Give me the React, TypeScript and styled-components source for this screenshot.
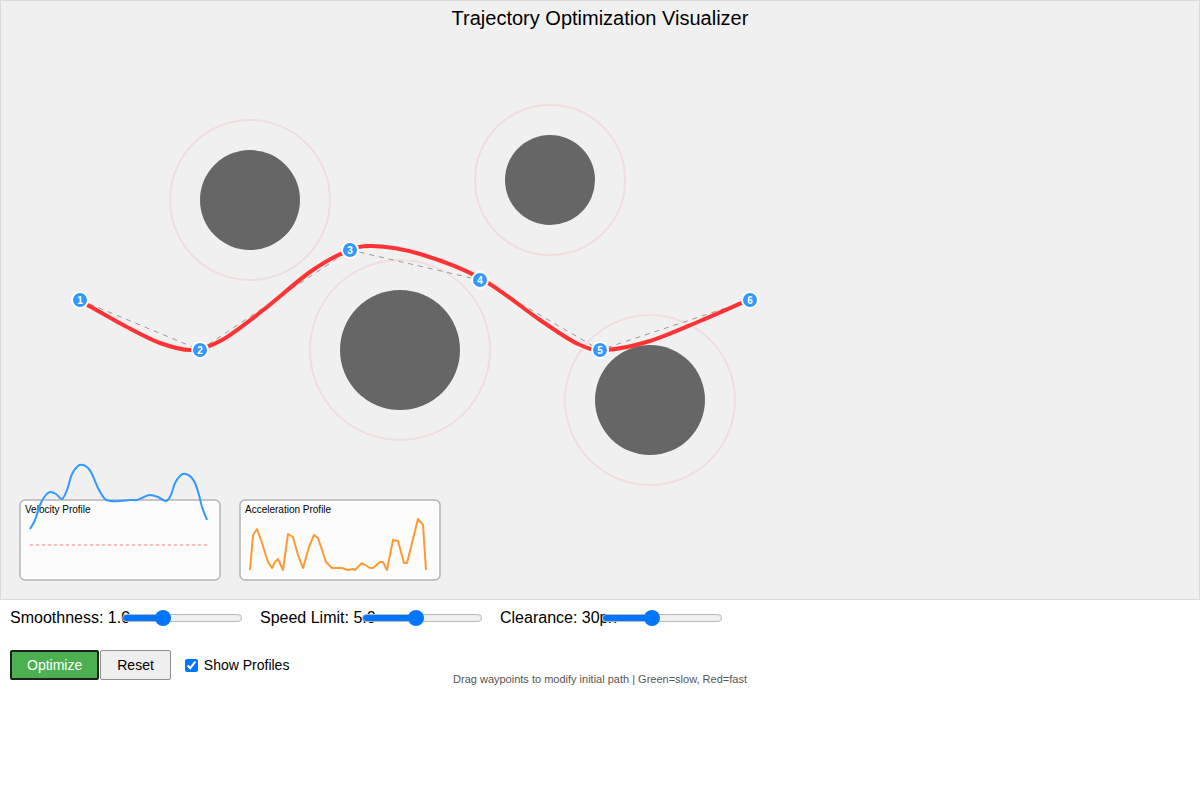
import React, { useState } from "react";
import styled, { createGlobalStyle } from "styled-components";

type Pt = [number, number];

const GlobalStyle = createGlobalStyle`
  html, body {
    margin: 0;
    padding: 0;
    background: #ffffff;
    font-family: "Liberation Sans", Arial, Helvetica, sans-serif;
    color: #000;
  }
`;

const obstacles = [
  { x: 250, y: 200, r: 50 },
  { x: 550, y: 180, r: 45 },
  { x: 400, y: 350, r: 60 },
  { x: 650, y: 400, r: 55 },
];

const waypoints: Pt[] = [
  [80, 300],
  [200, 350],
  [350, 250],
  [480, 280],
  [600, 350],
  [750, 300],
];

const optimized: Pt[] = [
  [84, 303],
  [125, 326],
  [160, 343],
  [192, 350],
  [222, 340],
  [262, 311],
  [310, 272],
  [345, 252],
  [372, 246],
  [420, 254],
  [480, 278],
  [540, 320],
  [578, 344],
  [605, 350],
  [650, 341],
  [700, 321],
  [748, 300],
];

const velocity: Pt[] = [
  [30, 529], [35, 520], [40, 505], [45, 496], [50, 492], [56, 494],
  [62, 499], [67, 490], [72, 474], [78, 466], [83, 465], [88, 468],
  [92, 474], [98, 488], [105, 499], [111, 501], [120, 501], [130, 500],
  [137, 500], [144, 497], [150, 495], [158, 497], [166, 501], [171, 495],
  [175, 483], [181, 475], [186, 474], [191, 477], [195, 483], [199, 495],
  [202, 507], [207, 520],
];

const acceleration: Pt[] = [
  [250, 570], [253, 535], [257, 529], [262, 543], [268, 562], [272, 568],
  [275, 562], [278, 559], [283, 570], [288, 534], [293, 537], [298, 555],
  [303, 568], [309, 547], [314, 535], [318, 538], [326, 562], [332, 568],
  [337, 568], [342, 568], [348, 570], [353, 569], [355, 570], [362, 563],
  [370, 568], [373, 568], [380, 562], [383, 562], [387, 570], [393, 540],
  [398, 541], [404, 563], [407, 563], [418, 519], [423, 525], [426, 570],
];

// catmull-rom through the points, as cubic beziers
const smoothPath = (pts: Pt[]) => {
  let d = `M ${pts[0][0]} ${pts[0][1]}`;
  for (let i = 0; i < pts.length - 1; i++) {
    const p0 = pts[i - 1] || pts[i];
    const p1 = pts[i];
    const p2 = pts[i + 1];
    const p3 = pts[i + 2] || p2;
    const c1x = p1[0] + (p2[0] - p0[0]) / 6;
    const c1y = p1[1] + (p2[1] - p0[1]) / 6;
    const c2x = p2[0] - (p3[0] - p1[0]) / 6;
    const c2y = p2[1] - (p3[1] - p1[1]) / 6;
    d += ` C ${c1x} ${c1y} ${c2x} ${c2y} ${p2[0]} ${p2[1]}`;
  }
  return d;
};

const toPoints = (pts: Pt[]) => pts.map((p) => p.join(",")).join(" ");

const Page = styled.div`
  width: 1200px;
`;

const Canvas = styled.div`
  width: 1200px;
  height: 600px;
  box-sizing: border-box;
  border: 1px solid #dadada;
  background: #f0f0f0;
`;

const Stage = styled.svg`
  display: block;
  width: 1198px;
  height: 598px;
`;

const Title = styled.text`
  font-family: "Liberation Sans", Arial, sans-serif;
  font-size: 20px;
  fill: #000;
`;

const Clearance = styled.circle`
  fill: none;
  stroke: rgba(255, 90, 90, 0.12);
  stroke-width: 2;
`;

const Obstacle = styled.circle`
  fill: #666666;
`;

const GuideLine = styled.polyline`
  fill: none;
  stroke: #999;
  stroke-width: 1;
  stroke-dasharray: 5 5;
`;

const PathLine = styled.path`
  fill: none;
  stroke: #ff3333;
  stroke-width: 4;
  stroke-linecap: round;
  stroke-linejoin: round;
`;

const WaypointDot = styled.circle`
  fill: #3399ff;
  stroke: #ffffff;
  stroke-width: 2;
`;

const WaypointLabel = styled.text`
  font-family: "Liberation Sans", Arial, sans-serif;
  font-size: 10px;
  font-weight: 700;
  fill: #fff;
`;

const PanelBox = styled.rect`
  fill: rgba(255, 255, 255, 0.8);
  stroke: #b4b4b4;
  stroke-width: 1.5;
`;

const PanelTitle = styled.text`
  font-family: "Liberation Sans", Arial, sans-serif;
  font-size: 10px;
  fill: #000;
`;

const ProfileLine = styled.path<{ $color: string }>`
  fill: none;
  stroke: ${(p) => p.$color};
  stroke-width: 2;
  stroke-linejoin: round;
`;

const ProfilePoly = styled.polyline<{ $color: string }>`
  fill: none;
  stroke: ${(p) => p.$color};
  stroke-width: 2;
  stroke-linejoin: round;
`;

const LimitLine = styled.line`
  stroke: rgba(255, 60, 60, 0.45);
  stroke-width: 1.5;
  stroke-dasharray: 3 3;
`;

const Controls = styled.div`
  padding: 7px 10px 0;
`;

const SliderRow = styled.div`
  display: flex;
  align-items: center;
  height: 22px;
`;

const SliderGroup = styled.div`
  display: flex;
  align-items: center;
  margin-right: 18px;
`;

const SliderLabel = styled.span<{ $width: number }>`
  display: inline-block;
  width: ${(p) => p.$width}px;
  font-size: 16px;
  white-space: nowrap;
  overflow: visible;
`;

const Range = styled.input<{ $fill: number }>`
  -webkit-appearance: none;
  appearance: none;
  position: relative;
  width: 120px;
  height: 8px;
  margin: 0;
  border-radius: 4px;
  border: 1px solid #b8b8b8;
  box-sizing: border-box;
  background: linear-gradient(
    to right,
    #0075ff 0%,
    #0075ff ${(p) => p.$fill}%,
    #efefef ${(p) => p.$fill}%,
    #efefef 100%
  );
  outline: none;

  &::-webkit-slider-thumb {
    -webkit-appearance: none;
    appearance: none;
    width: 16px;
    height: 16px;
    border-radius: 50%;
    background: #0075ff;
    border: none;
  }
`;

const ActionRow = styled.div`
  display: flex;
  align-items: center;
  height: 30px;
  margin-top: 21px;
`;

const Button = styled.button<{ $primary?: boolean }>`
  height: 30px;
  margin: 0 1px 0 0;
  padding: 0 ${(p) => (p.$primary ? 15 : 16)}px;
  font-family: "Liberation Sans", Arial, sans-serif;
  font-size: 14px;
  border-radius: 2px;
  cursor: pointer;
  color: ${(p) => (p.$primary ? "#fff" : "#000")};
  background: ${(p) => (p.$primary ? "#4caf50" : "#efefef")};
  border: ${(p) => (p.$primary ? "2px solid #1e1e1e" : "1px solid #8f8f8f")};
`;

const CheckLabel = styled.label`
  display: flex;
  align-items: center;
  margin-left: 13px;
  font-size: 14px;
  gap: 6px;
`;

const Check = styled.input`
  width: 13px;
  height: 13px;
  margin: 0;
  accent-color: #0075ff;
`;

const Hint = styled.div`
  margin-top: -7px;
  text-align: center;
  font-size: 11px;
  line-height: 13px;
  color: #555;
`;

const sliders = [
  { label: "Smoothness: 1.0", width: 112, min: 0.1, max: 3, value: 1.0, step: 0.1 },
  { label: "Speed Limit: 5.0", width: 102, min: 1, max: 10, value: 5.0, step: 0.1 },
  { label: "Clearance: 30px", width: 102, min: 10, max: 60, value: 30, step: 1 },
];

const App: React.FC = () => {
  const [showProfiles, setShowProfiles] = useState(true);

  return (
    <Page>
      <GlobalStyle />
      <Canvas>
        <Stage viewBox="1 1 1198 598">
          <Title x={600} y={25} textAnchor="middle">
            Trajectory Optimization Visualizer
          </Title>

          {obstacles.map((o, i) => (
            <g key={i}>
              <Clearance cx={o.x} cy={o.y} r={o.r + 30} />
              <Obstacle cx={o.x} cy={o.y} r={o.r} />
            </g>
          ))}

          <GuideLine points={toPoints(waypoints)} />
          <PathLine d={smoothPath(optimized)} />

          {waypoints.map(([x, y], i) => (
            <g key={i}>
              <WaypointDot cx={x} cy={y} r={8} />
              <WaypointLabel x={x} y={y + 3.5} textAnchor="middle">
                {i + 1}
              </WaypointLabel>
            </g>
          ))}

          {showProfiles && (
            <>
              <PanelBox x={20} y={500} width={200} height={80} rx={5} />
              <PanelTitle x={25} y={513}>
                Velocity Profile
              </PanelTitle>
              <LimitLine x1={30} y1={545} x2={208} y2={545} />
              <ProfileLine $color="#3399ff" d={smoothPath(velocity)} />

              <PanelBox x={240} y={500} width={200} height={80} rx={5} />
              <PanelTitle x={245} y={513}>
                Acceleration Profile
              </PanelTitle>
              <ProfilePoly $color="#ff9933" points={toPoints(acceleration)} />
            </>
          )}
        </Stage>
      </Canvas>

      <Controls>
        <SliderRow>
          {sliders.map((s) => (
            <SliderGroup key={s.label}>
              <SliderLabel $width={s.width}>{s.label}</SliderLabel>
              <Range
                type="range"
                min={s.min}
                max={s.max}
                step={s.step}
                defaultValue={s.value}
                $fill={((s.value - s.min) / (s.max - s.min)) * 100}
              />
            </SliderGroup>
          ))}
        </SliderRow>

        <ActionRow>
          <Button $primary>Optimize</Button>
          <Button>Reset</Button>
          <CheckLabel>
            <Check
              type="checkbox"
              checked={showProfiles}
              onChange={(e) => setShowProfiles(e.target.checked)}
            />
            Show Profiles
          </CheckLabel>
        </ActionRow>
      </Controls>
      <Hint>Drag waypoints to modify initial path | Green=slow, Red=fast</Hint>
    </Page>
  );
};

export default App;
